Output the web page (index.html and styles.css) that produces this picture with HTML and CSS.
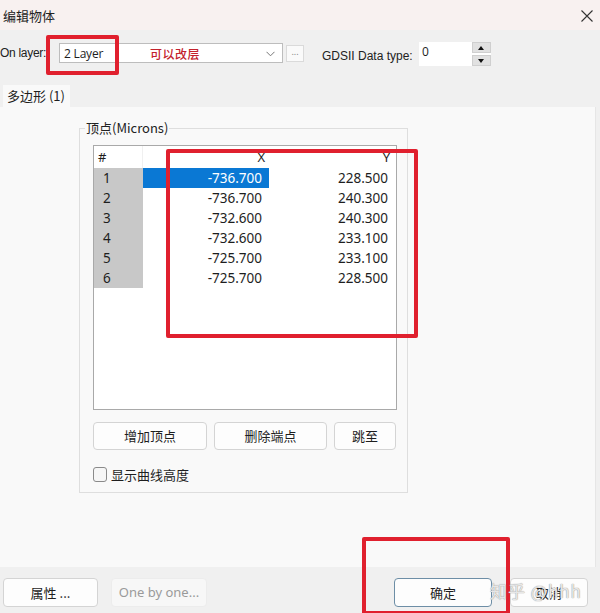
FILE: index.html
```html
<!DOCTYPE html>
<html lang="zh-CN">
<head>
  <meta charset="UTF-8">
  <title>编辑物体</title>
  <link rel="stylesheet" href="styles.css">
</head>
<body>

<div class="titlebar">
  <span class="title">编辑物体</span>
  <svg class="close" width="12" height="12" viewBox="0 0 12 12"><path d="M0.5 0.5 L11.5 11.5 M11.5 0.5 L0.5 11.5" stroke="#333" stroke-width="1.1" fill="none"/></svg>
</div>

<div class="toolbar">
  <span class="lbl layer-lbl">On layer:</span>
  <div class="combo">
    <span class="combo-val">2 Layer</span>
    <span class="note">可以改层</span>
    <svg class="chev" width="9" height="6" viewBox="0 0 9 6"><path d="M0.5 0.8 L4.5 4.8 L8.5 0.8" stroke="#777" stroke-width="1" fill="none"/></svg>
  </div>
  <div class="dots">...</div>
  <span class="lbl gds-lbl">GDSII Data type:</span>
  <div class="spin">
    <div class="spin-val">0</div>
    <div class="spin-btns">
      <span class="arrow up"></span>
      <span class="arrow down"></span>
    </div>
  </div>
</div>

<div class="tabs">
  <div class="tab">多边形 (1)</div>
</div>

<div class="panel">
  <fieldset class="group">
    <legend>顶点(Microns)</legend>
    <div class="list">
      <div class="row head">
        <span class="c-num">#</span>
        <span class="c-x">X</span>
        <span class="c-y">Y</span>
      </div>
      <div class="row"><span class="c-num">1</span><span class="c-x sel">-736.700</span><span class="c-y">228.500</span></div>
      <div class="row"><span class="c-num">2</span><span class="c-x">-736.700</span><span class="c-y">240.300</span></div>
      <div class="row"><span class="c-num">3</span><span class="c-x">-732.600</span><span class="c-y">240.300</span></div>
      <div class="row"><span class="c-num">4</span><span class="c-x">-732.600</span><span class="c-y">233.100</span></div>
      <div class="row"><span class="c-num">5</span><span class="c-x">-725.700</span><span class="c-y">233.100</span></div>
      <div class="row"><span class="c-num">6</span><span class="c-x">-725.700</span><span class="c-y">228.500</span></div>
    </div>
    <div class="btn-row">
      <div class="btn w-add">增加顶点</div>
      <div class="btn w-del">删除端点</div>
      <div class="btn w-jump">跳至</div>
    </div>
    <label class="check"><span class="box"></span>显示曲线高度</label>
  </fieldset>
</div>

<div class="footer">
  <div class="btn b-prop">属性 ...</div>
  <div class="btn b-one">One by one...</div>
  <div class="btn b-ok">确定</div>
  <div class="btn b-cancel">取消</div>
</div>

<!-- annotations drawn over the dialog -->
<div class="mark mark-layer"></div>
<div class="mark mark-list"></div>
<div class="mark mark-ok"></div>
<div class="watermark">知乎 @hhh</div>

</body>
</html>
```

FILE: styles.css
```css
body {
  margin: 0;
  width: 600px;
  height: 613px;
  overflow: hidden;
  background-color: #f0f0f0;
  font-family: "Noto Sans", "Noto Sans CJK SC", sans-serif;
  font-size: 13px;
  color: #1e1e1e;
  position: relative;
}
.titlebar {
  height: 30px;
  background-color: #f8f1f0;
  display: flex;
  align-items: center;
  justify-content: space-between;
  padding: 0 7px 0 3px;
}
.title {
  font-family: "Noto Sans CJK SC", sans-serif;
  font-size: 13px;
  color: #222;
}
.close {
  margin-top: 2px;
}

/* layer row */
.toolbar {
  display: flex;
  align-items: flex-start;
  padding-top: 12px;
  height: 24px;
}
.lbl {
  font-family: "Liberation Sans", Arial, sans-serif;
  font-size: 12px;
  line-height: 20px;
  color: #222;
}
.layer-lbl {
  width: 59px;
  margin-top: 1px;
  letter-spacing: -0.3px;
}
.combo {
  width: 224px;
  height: 20px;
  margin-top: 1px;
  box-sizing: border-box;
  border: 1px solid #bdbdbd;
  background-color: #fff;
  display: flex;
  align-items: center;
  padding-left: 4px;
  position: relative;
}
.combo-val {
  font-family: "Open Sans", sans-serif;
  font-size: 12px;
  width: 86px;
  letter-spacing: -0.2px;
}
.note {
  font-family: "Noto Sans CJK SC", sans-serif;
  font-size: 12px;
  font-weight: 500;
  letter-spacing: 0.5px;
  color: #c3222d;
}
.chev {
  position: absolute;
  right: 7px;
  top: 7px;
}
.dots {
  width: 18px;
  height: 17px;
  margin: 3px 0 0 3px;
  box-sizing: border-box;
  border: 1px solid #dadada;
  background-color: #fafafa;
  font-size: 9px;
  line-height: 12px;
  text-align: center;
  color: #888;
}
.gds-lbl {
  margin: 4px 0 0 18px;
  width: 97px;
}
.spin {
  display: flex;
  height: 24px;
}
.spin-val {
  width: 53px;
  background-color: #fff;
  font-family: "Open Sans", sans-serif;
  font-size: 12px;
  padding: 1px 0 0 3px;
  box-sizing: border-box;
}
.spin-btns {
  width: 19px;
  display: flex;
  flex-direction: column;
  gap: 2px;
  background-color: #fff;
}
.arrow {
  flex: 1;
  background-color: #e1e1e1;
  border: 1px solid #cfcfcf;
  position: relative;
}
.arrow::after {
  content: "";
  position: absolute;
  left: 5px;
  top: 3px;
  border-left: 3.5px solid transparent;
  border-right: 3.5px solid transparent;
}
.up::after {
  border-bottom: 4px solid #111;
}
.down::after {
  border-top: 4px solid #111;
}

/* tab + panel */
.tabs {
  margin-top: 19px;
  padding-left: 3px;
  display: flex;
}
.tab {
  width: 67px;
  height: 22px;
  background-color: #f9f9f9;
  font-family: "Noto Sans CJK SC", sans-serif;
  font-size: 13px;
  line-height: 22px;
  padding-left: 4px;
  box-sizing: border-box;
}
.panel {
  width: 596px;
  height: 460px;
  background-color: #f9f9f9;
  border-right: 1px solid #e6e6e6;
  box-sizing: border-box;
  padding-top: 12px;
  padding-left: 79px;
}
.group {
  width: 329px;
  margin: 0;
  padding: 8px 10px 10px 13px;
  box-sizing: border-box;
  border: 1px solid #dedede;
  min-width: 0;
}
.group legend {
  font-family: "Noto Sans CJK SC", sans-serif;
  font-size: 13px;
  line-height: 18px;
  padding: 0 1px;
  margin-left: -8px;
  color: #222;
}
.list {
  width: 304px;
  height: 265px;
  box-sizing: border-box;
  border: 1px solid #a9a9a9;
  background-color: #fff;
}
.row {
  display: flex;
  height: 20px;
  line-height: 20px;
  font-size: 13.5px;
}
.row.head {
  height: 22px;
  line-height: 22px;
  font-size: 13px;
}
.c-num {
  width: 49px;
  padding-left: 9px;
  box-sizing: border-box;
  background-color: #c8c8c8;
}
.head .c-num {
  background-color: #fff;
  padding-left: 4px;
  border-right: 1px solid #f0f0f0;
}
.c-x {
  width: 126px;
  text-align: right;
  padding-right: 7px;
  box-sizing: border-box;
}
.c-y {
  width: 126px;
  text-align: right;
  padding-right: 7px;
  box-sizing: border-box;
}
.head .c-x {
  padding-right: 4px;
}
.head .c-y {
  padding-right: 5px;
}
.sel {
  background-color: #0a78d4;
  color: #fff;
}

.btn-row {
  display: flex;
  gap: 7px;
  margin-top: 12px;
}
.btn {
  height: 28px;
  box-sizing: border-box;
  border: 1px solid #d4d4d4;
  border-radius: 4px;
  background-color: #fdfdfd;
  font-family: "Noto Sans CJK SC", sans-serif;
  font-size: 13px;
  line-height: 26px;
  text-align: center;
  color: #1e1e1e;
}
.w-add {
  width: 114px;
}
.w-del {
  width: 113px;
}
.w-jump {
  width: 62px;
}
.check {
  display: flex;
  align-items: center;
  margin-top: 17px;
  height: 15px;
  font-family: "Noto Sans CJK SC", sans-serif;
  font-size: 13px;
}
.box {
  width: 14px;
  height: 15px;
  box-sizing: border-box;
  border: 1px solid #8a8a8a;
  border-radius: 3px;
  background-color: #f6f6f6;
  margin-right: 4px;
}

/* bottom buttons */
.footer {
  display: flex;
  padding-top: 11px;
}
.footer .btn {
  height: 29px;
  line-height: 27px;
}
.b-prop {
  width: 95px;
  margin-left: 3px;
}
.b-one {
  width: 96px;
  margin-left: 13px;
  font-family: "Noto Sans", sans-serif;
  color: #9a9a9a;
  background-color: #f7f7f7;
  border-color: #ececec;
}
.b-ok {
  width: 98px;
  margin-left: 187px;
  border-color: #6d8ea6;
}
.b-cancel {
  width: 78px;
  margin-left: 18px;
}

/* red annotation frames */
.mark {
  position: absolute;
  border: 4px solid #e0202e;
  border-radius: 2px;
  box-sizing: border-box;
}
.mark-layer {
  left: 46px;
  top: 35px;
  width: 73px;
  height: 40px;
}
.mark-list {
  left: 166px;
  top: 149px;
  width: 252px;
  height: 189px;
}
.mark-ok {
  left: 362px;
  top: 537px;
  width: 148px;
  height: 78px;
}
.watermark {
  position: absolute;
  left: 490px;
  top: 578px;
  font-family: "Noto Sans CJK SC", sans-serif;
  font-size: 17px;
  color: rgba(255, 255, 255, 0.8);
  text-shadow: 0 0 1px #8c8c8c, 0 0 1px #b0b0b0;
  letter-spacing: 1px;
}
```
